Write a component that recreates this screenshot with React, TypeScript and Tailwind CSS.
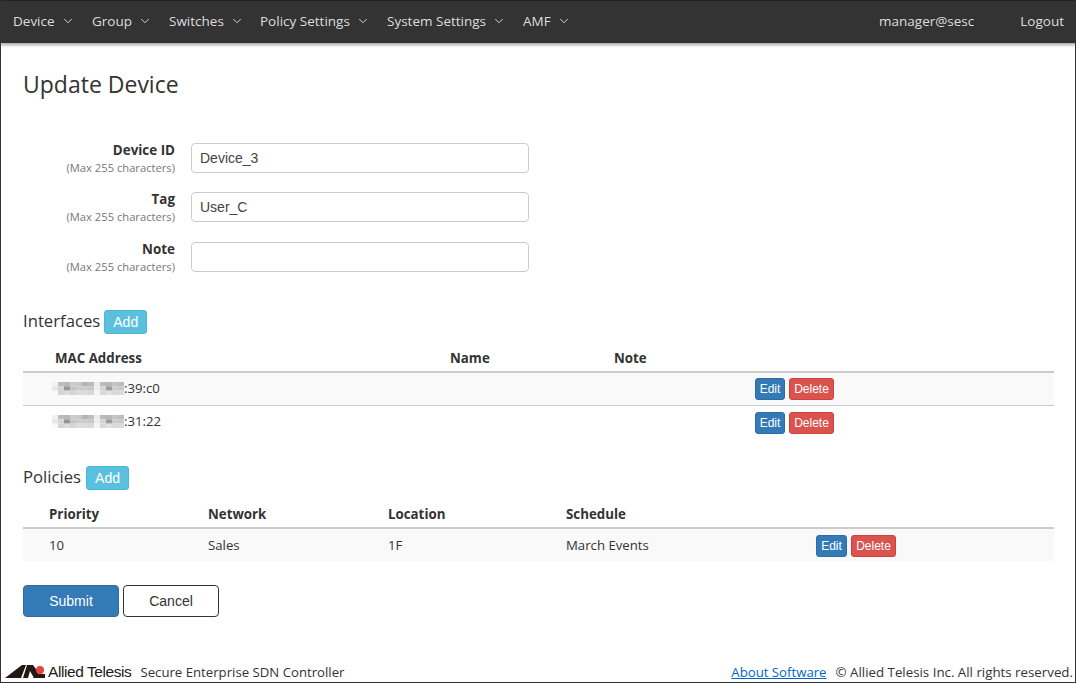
import React from "react";
import { ChevronDown } from "lucide-react";

const uiFont = "font-['Open_Sans','Noto_Sans',sans-serif]";
const btnFont = "font-['Liberation_Sans',Arial,sans-serif]";

const navItems = [
  { label: "Device", width: "w-[79px]" },
  { label: "Group", width: "w-[77px]" },
  { label: "Switches", width: "w-[91px]" },
  { label: "Policy Settings", width: "w-[127px]" },
  { label: "System Settings", width: "w-[136px]" },
  { label: "AMF", width: "w-[60px]" },
];

const fields = [
  { label: "Device ID", value: "Device_3", gap: "mb-[19px]" },
  { label: "Tag", value: "User_C", gap: "mb-[20px]" },
  { label: "Note", value: "", gap: "" },
];

// pixelated patch that hides the first octets of a MAC address
const Mosaic: React.FC = () => {
  const shades = [
    ["#f2f2f2", "#bcbcbc", "#b8b8b8", "#cccccc", "#c8c8c8", "#b4b4b4", "#bcbcbc", "#ececec", "#bcbcbc", "#b8b8b8", "#c4c4c4", "#bcbcbc"],
    ["#e6e6e6", "#d4d4d4", "#969696", "#c4c4c4", "#cccccc", "#cccccc", "#c8c8c8", "#eeeeee", "#d4d4d4", "#9c9c9c", "#cccccc", "#c8c8c8"],
    ["#f8f8f8", "#d4d4d4", "#dcdcdc", "#d4d4d4", "#dcdcdc", "#dcdcdc", "#d8d8d8", "#f4f4f4", "#d8d8d8", "#e0e0e0", "#d8d8d8", "#dcdcdc"],
  ];
  return (
    <svg width="72" height="13" viewBox="0 0 72 13" className="block shrink-0">
      {shades.map((row, y) =>
        row.map((fill, x) => <rect key={`${x}-${y}`} x={x * 6} y={y * 4.33} width="6" height="4.34" fill={fill} />)
      )}
    </svg>
  );
};

const SmallBtn: React.FC<{ color: string; children: React.ReactNode }> = ({ color, children }) => (
  <button className={`h-[22px] rounded-[3px] border text-white text-[12px] leading-none ${btnFont} ${color}`}>
    {children}
  </button>
);

const RowActions: React.FC<{ editWidth?: string }> = ({ editWidth = "w-[30px]" }) => (
  <div className="flex gap-1">
    <SmallBtn color={`${editWidth} bg-[#337ab7] border-[#2e6da4]`}>Edit</SmallBtn>
    <SmallBtn color="w-[45px] bg-[#d9534f] border-[#d43f3a]">Delete</SmallBtn>
  </div>
);

const AddBtn: React.FC = () => (
  <button className={`h-6 w-[43px] rounded-[3px] border border-[#46b8da] bg-[#5bc0de] text-white text-[14px] leading-none ${btnFont}`}>
    Add
  </button>
);

const App: React.FC = () => {
  return (
    <div className={`w-[1076px] h-[683px] overflow-hidden flex flex-col bg-white border-x border-b border-[#333] text-[#333] ${uiFont}`}>
      {/* Top navigation */}
      <nav className="h-[43px] shrink-0 -mx-px flex items-center bg-[#333] border-t border-[#222] text-[#ddd] text-[13.5px] shadow-[0_2px_3px_rgba(0,0,0,0.35)] pl-[13px] pb-[2px]">
        {navItems.map((item) => (
          <div key={item.label} className={`flex items-center gap-[6px] ${item.width}`}>
            <span className="whitespace-nowrap">{item.label}</span>
            <ChevronDown className="w-[14px] h-[14px] shrink-0" strokeWidth={1.6} />
          </div>
        ))}
        <span className="ml-auto">manager@sesc</span>
        <span className="ml-[46px] mr-3">Logout</span>
      </nav>

      <main className="flex-1 flex flex-col px-[22px]">
        <h1 className="mt-[25px] text-[23px] leading-[33px] text-[#333]">Update Device</h1>

        {/* Device form */}
        <div className="mt-[42px] flex flex-col">
          {fields.map((f) => (
            <div key={f.label} className={`flex gap-4 h-[30px] ${f.gap}`}>
              <div className="w-[152px] text-right">
                <div className="text-[13.4px] leading-[15px] font-bold">{f.label}</div>
                <div className="text-[11.2px] leading-[16px] mt-[2px] text-[#777] whitespace-nowrap">(Max 255 characters)</div>
              </div>
              <input
                readOnly
                value={f.value}
                className={`w-[338px] h-[30px] px-2 rounded-[4px] border border-[#ccc] text-[14px] text-[#444] outline-none ${btnFont}`}
              />
            </div>
          ))}
        </div>

        {/* Interfaces */}
        <div className="mt-[38px] flex items-center gap-1 h-6">
          <h2 className="text-[16.7px] -mt-[3px]">Interfaces</h2>
          <AddBtn />
        </div>
        <div className="mt-[16px] w-[1031px]">
          <div className="flex h-[23px] items-center text-[13.3px] font-bold border-b-2 border-[#ccc] pb-1">
            <div className="w-[427px] pl-8">MAC Address</div>
            <div className="w-[164px]">Name</div>
            <div>Note</div>
          </div>
          <div className="flex h-[33px] items-center text-[13.2px] bg-[#f9f9f9] border-b border-[#ccc]">
            <div className="w-[732px] pl-[29px] flex items-center">
              <Mosaic />
              <span>:39:c0</span>
            </div>
            <RowActions />
          </div>
          <div className="flex h-[33px] items-center text-[13.2px]">
            <div className="w-[732px] pl-[29px] flex items-center -mt-[2px]">
              <Mosaic />
              <span>:31:22</span>
            </div>
            <RowActions />
          </div>
        </div>

        {/* Policies */}
        <div className="mt-[27px] flex items-center gap-[5px] h-6">
          <h2 className="text-[16.7px] -mt-[3px]">Policies</h2>
          <AddBtn />
        </div>
        <div className="mt-[16px] w-[1031px]">
          <div className="flex h-[23px] items-center text-[13.3px] font-bold border-b-2 border-[#ccc] pb-1">
            <div className="w-[185px] pl-[26px]">Priority</div>
            <div className="w-[180px]">Network</div>
            <div className="w-[178px]">Location</div>
            <div>Schedule</div>
          </div>
          <div className="flex h-[32px] items-center text-[13.2px] bg-[#f9f9f9] pt-[2px]">
            <div className="w-[185px] pl-[26px]">10</div>
            <div className="w-[180px]">Sales</div>
            <div className="w-[178px]">1F</div>
            <div className="w-[250px]">March Events</div>
            <RowActions editWidth="w-[31px]" />
          </div>
        </div>

        <div className={`mt-[24px] flex gap-1 text-[14px] ${btnFont}`}>
          <button className="w-24 h-8 rounded-[4px] bg-[#337ab7] border border-[#2e6da4] text-white">Submit</button>
          <button className="w-24 h-8 rounded-[4px] bg-white border border-[#333] text-[#333]">Cancel</button>
        </div>

        {/* Footer */}
        <div className="mt-auto -ml-[18px] mr-[-22px] h-[20px] pt-[2px] flex items-center text-[13.2px]">
          <svg width="40" height="14" viewBox="0 0 40 14" className="shrink-0 -mt-[4px]">
            <polygon points="0,14 17,1 21,1 16,14" fill="#231815" />
            <polygon points="18,14 22,1 28,1 33,8 33,14 29,14 25,7 23,14" fill="#231815" />
            <polygon points="28,14 32,10 40,10 40,14" fill="#231815" />
            <circle cx="35" cy="6" r="4" fill="#e8413c" />
          </svg>
          <span className="ml-[3px] -mt-[2px] text-[15.5px] tracking-[-0.42px] text-[#231815] font-['Liberation_Sans',sans-serif]">Allied Telesis</span>
          <span className="ml-[9px]">Secure Enterprise SDN Controller</span>
          <a href="#" className="ml-auto text-[#0066cc] underline">About Software</a>
          <span className="ml-[9px] mr-[2px] text-[13.3px]">© Allied Telesis Inc. All rights reserved.</span>
        </div>
      </main>
    </div>
  );
};

export default App;
